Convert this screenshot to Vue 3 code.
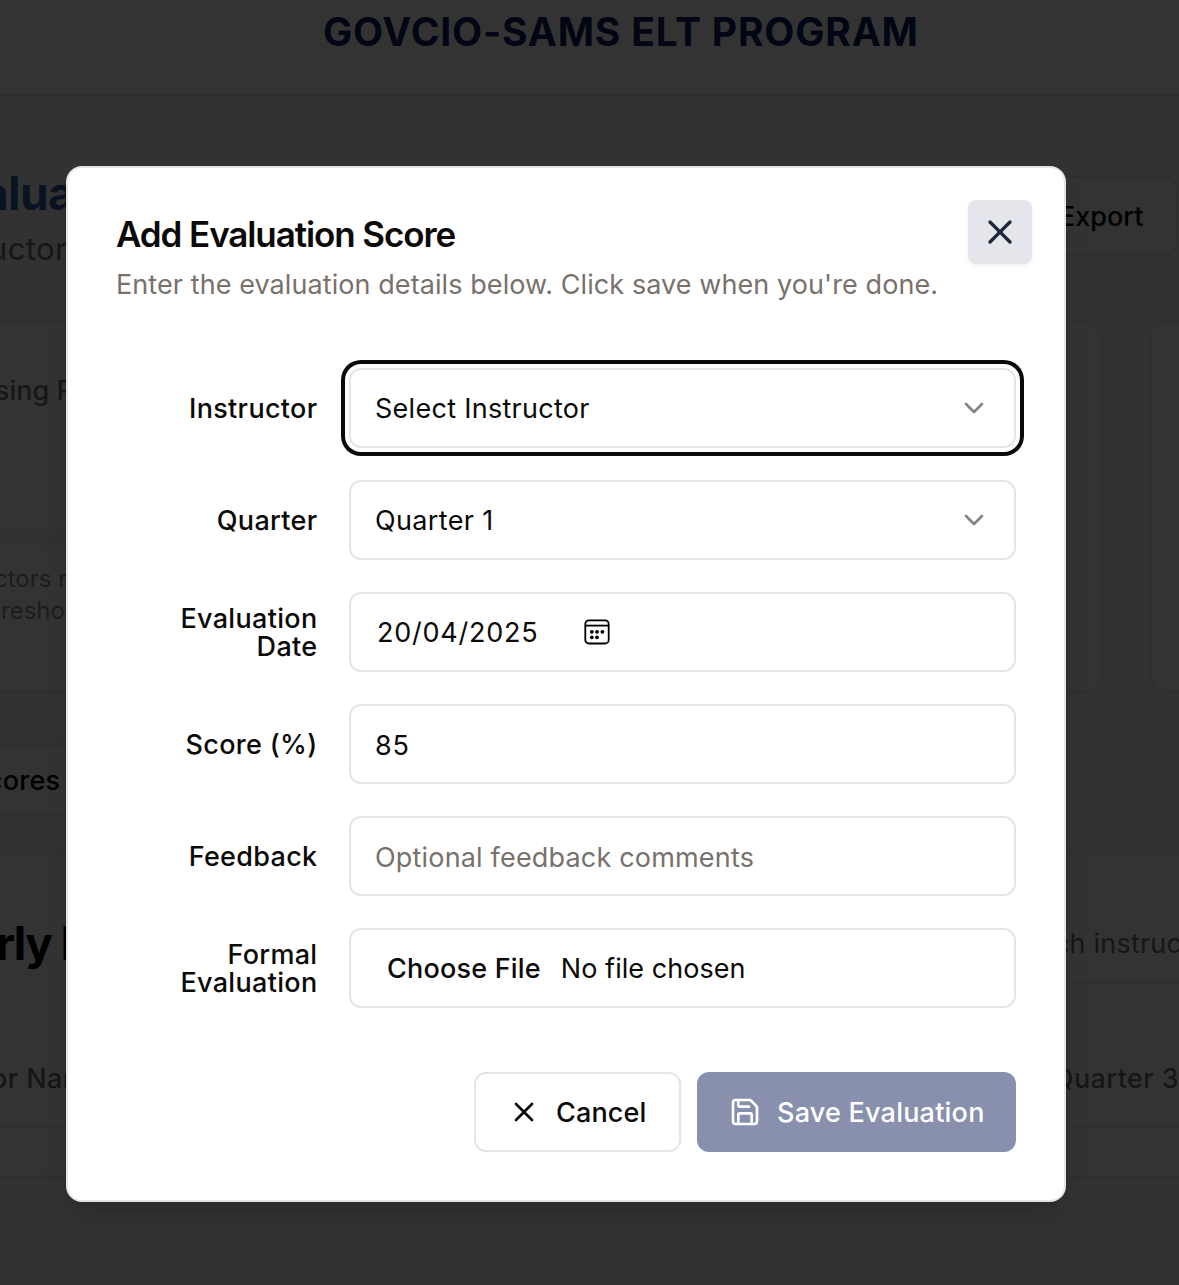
<script setup>
const close = ['M18 6 6 18', 'm6 6 12 12']
const save = [
  'M15.2 3a2 2 0 0 1 1.4.6l3.8 3.8a2 2 0 0 1 .6 1.4V19a2 2 0 0 1-2 2H5a2 2 0 0 1-2-2V5a2 2 0 0 1 2-2z',
  'M17 21v-7a1 1 0 0 0-1-1H8a1 1 0 0 0-1 1v7',
  'M7 3v4a1 1 0 0 0 1 1h7',
]
</script>

<template>
  <div class="screen">
    <div class="page">
      <header class="topbar"><span class="brand">GOVCIO-SAMS ELT PROGRAM</span></header>
      <section class="intro">
        <div>
          <div class="page-title">alua</div>
          <div class="page-sub">uctor</div>
        </div>
        <div class="export">Export</div>
      </section>
      <section class="cards">
        <div class="card stat">
          <div class="stat-title">sing R</div>
          <div class="stat-foot">ctors r<br /><span class="indent">resho</span></div>
        </div>
        <div class="card next"></div>
      </section>
      <div class="tabs"><span>cores</span></div>
      <section class="panel">
        <div class="panel-head">
          <span class="panel-title">rly I</span>
          <span class="search">ch instruc</span>
        </div>
        <div class="table-head"><span>or Nan</span><span class="q3">Quarter 3</span></div>
      </section>
    </div>
    <div class="overlay"></div>

    <div class="dialog" role="dialog">
      <button class="close" aria-label="Close">
        <svg class="icon x-lg" viewBox="0 0 24 24"><path v-for="d in close" :key="d" :d="d" /></svg>
      </button>
      <h2>Add Evaluation Score</h2>
      <p class="desc">Enter the evaluation details below. Click save when you're done.</p>

      <div class="form">
        <label>Instructor</label>
        <div class="field focused">
          <span class="t-select">Select Instructor</span>
          <svg class="icon chevron" viewBox="0 0 24 24"><path d="m6 9 6 6 6-6" /></svg>
        </div>
        <label>Quarter</label>
        <div class="field">
          <span class="t-quarter">Quarter 1</span>
          <svg class="icon chevron" viewBox="0 0 24 24"><path d="m6 9 6 6 6-6" /></svg>
        </div>
        <label>Evaluation Date</label>
        <div class="field date">
          <span class="t-date">20/04/2025</span>
          <svg class="calendar" viewBox="0 0 26 26">
            <rect x="1.3" y="1.3" width="23.4" height="23.2" rx="3.6" />
            <path d="M1.3 6.6h23.4" />
            <g class="dots">
              <circle cx="7.8" cy="12.8" r="1.9" /><circle cx="13" cy="12.8" r="1.9" /><circle cx="18.4" cy="12.8" r="1.9" />
              <circle cx="7.8" cy="18.3" r="1.9" /><circle cx="13" cy="18.3" r="1.9" />
            </g>
          </svg>
        </div>
        <label>Score (%)</label>
        <div class="field low"><span class="t-score">85</span></div>
        <label>Feedback</label>
        <div class="field low"><span class="placeholder">Optional feedback comments</span></div>
        <label>Formal Evaluation</label>
        <div class="field file"><span class="choose">Choose File</span><span class="none">No file chosen</span></div>
      </div>

      <div class="actions">
        <button class="btn outline">
          <svg class="icon" viewBox="0 0 24 24"><path v-for="d in close" :key="d" :d="d" /></svg>
          <span class="t-cancel">Cancel</span>
        </button>
        <button class="btn primary">
          <svg class="icon" viewBox="0 0 24 24"><path v-for="d in save" :key="d" :d="d" /></svg>
          <span>Save Evaluation</span>
        </button>
      </div>
    </div>
  </div>
</template>

<style>
body { background: #323232; }
</style>

<style scoped>
* { box-sizing: border-box; }
.screen {
  position: relative;
  width: 1179px;
  height: 1285px;
  overflow: hidden;
  font-family: Inter, "Liberation Sans", sans-serif;
  font-size: 27px;
  line-height: 40px;
  letter-spacing: 0.2px;
  color: #0c0a09;
  white-space: nowrap;
}
.page { height: 100%; background: #fafafa; display: flex; flex-direction: column; }
.topbar {
  height: 96px;
  flex: none;
  background: #fff;
  border-bottom: 2px solid #e5e7eb;
  box-shadow: 0 2px 4px rgba(0, 0, 0, 0.06);
  padding: 4px 0 0 323px;
}
.brand { font-size: 39px; line-height: 56px; font-weight: 700; color: #0a1e64; letter-spacing: 0.8px; }
.intro { height: 224px; flex: none; display: flex; justify-content: space-between; padding: 72px 1px 0 0; }
.page-title { font-size: 46px; line-height: 48px; font-weight: 700; letter-spacing: -0.6px; color: #2d5fa5; margin: 1px 0 0 -18px; }
.page-sub { font-size: 31px; line-height: 48px; color: #6b7280; margin: 8px 0 0 -11px; letter-spacing: 0.4px; }
.export {
  width: 160px; height: 80px; margin-top: 8px; padding: 19px 0 0 39px;
  border: 2px solid #eaeaea; border-radius: 12px; background: #fff;
  font-weight: 500; color: #000; letter-spacing: 0;
}
.cards { display: flex; gap: 48px; height: 372px; flex: none; }
.card { border: 2px solid #eee; border-radius: 16px; background: #fff; box-shadow: 0 2px 4px rgba(0, 0, 0, 0.05); }
.stat { width: 1122px; margin-left: -20px; flex: none; padding-top: 49px; display: flex; flex-direction: column; }
.stat-title { width: 600px; font-weight: 500; color: #6b7280; padding-left: 13px; height: 175px; border-bottom: 16px solid #f4f4f4; letter-spacing: 0; }
.stat-foot { font-size: 24px; line-height: 32px; color: #8b909b; padding: 17px 0 0 12px; letter-spacing: 0; }
.indent { padding-left: 7px; }
.next { flex: 0 0 200px; }
.tabs { width: 600px; height: 78px; flex: none; margin-top: 48px; background: #fff; font-weight: 500; color: #000; padding: 13px 0 0; border-top: 8px solid #f3f3f3; border-bottom: 6px solid #f3f3f3; }
.tabs span { margin-left: -13px; }
.panel { height: 325px; flex: none; margin: 34px -20px 0; border: 2px solid #eaeaea; background: #fff; box-shadow: 0 2px 4px rgba(0, 0, 0, 0.05); }
.panel-head { height: 178px; display: flex; justify-content: space-between; padding: 49px 0 0; }
.panel-title { font-size: 46px; line-height: 80px; font-weight: 700; letter-spacing: -1.6px; color: #000; margin-left: 14px; }
.search { width: 400px; height: 80px; border: 2px solid #ebebeb; padding: 19px 0 0 255px; color: #78716c; }
.table-head { height: 95px; border-bottom: 2px solid #eaeaea; font-weight: 500; color: #78716c; display: flex; justify-content: space-between; padding: 27px 18px 0 9px; letter-spacing: 0.4px; }
.overlay { position: absolute; inset: 0; background: rgba(0, 0, 0, 0.8); }

.dialog {
  position: absolute; left: 66px; top: 166px; width: 1000px; height: 1036px;
  background: #fff; border: 2px solid #e5e5e5; border-radius: 16px; padding: 48px;
  box-shadow: 0 20px 30px -6px rgba(0, 0, 0, 0.1), 0 8px 12px -8px rgba(0, 0, 0, 0.1);
}
.close {
  position: absolute; right: 32px; top: 32px; width: 64px; height: 64px; padding: 0; border: 0;
  border-radius: 8px; background: #e5e6eb; color: #1f2937; display: grid; place-items: center;
  box-shadow: 0 2px 4px rgba(0, 0, 0, 0.05);
}
.icon { width: 32px; height: 32px; fill: none; stroke: currentColor; stroke-width: 2; stroke-linecap: round; stroke-linejoin: round; flex: none; }
.x-lg { width: 40px; height: 40px; }
h2 { margin: 0; font-size: 35px; line-height: 36px; font-weight: 600; letter-spacing: -1.1px; }
.desc { margin: 13px 0 0; color: #78716c; line-height: 40px; letter-spacing: 0.08px; }
.form { margin-top: 63px; display: grid; grid-template-columns: 201px 667px; column-gap: 32px; row-gap: 32px; align-items: center; }
label { font-weight: 500; line-height: 28px; text-align: right; white-space: normal; letter-spacing: 0.32px; padding-top: 1px; margin-right: -0.5px; }
.field { height: 80px; border: 2px solid #e5e5e5; border-radius: 12px; padding: 0 24px; display: flex; align-items: center; background: #fff; }
.field span { padding-top: 1px; }
.field.low span { padding-top: 3px; }
.focused { box-shadow: 0 0 0 4px #fff, 0 0 0 8px #0c0a09; }
.chevron { margin-left: auto; opacity: 0.5; }
.t-select { letter-spacing: 0.28px; }
.t-quarter { letter-spacing: 0.36px; }
.t-date { letter-spacing: 0.77px; }
.t-score { letter-spacing: 0.9px; }
.date { padding-left: 26px; }
.placeholder { color: #78716c; letter-spacing: 0.18px; }
.calendar { width: 26px; height: 26px; margin-left: 45px; fill: none; stroke: #000; stroke-width: 1.8; }
.dots { fill: #000; stroke: none; }
.file { padding-left: 36px; }
.choose { font-weight: 500; margin-right: 20px; }
.none { letter-spacing: 0.05px; }
.actions { margin-top: 64px; display: flex; justify-content: flex-end; gap: 16px; }
.btn { height: 80px; border-radius: 12px; display: flex; align-items: center; gap: 16px; font: inherit; font-weight: 500; letter-spacing: 0.22px; padding: 0; white-space: nowrap; }
.btn span { padding-top: 1px; }
.btn .t-cancel { letter-spacing: 0.15px; }
.outline { width: 207px; padding-left: 32px; border: 2px solid #e5e5e5; background: #fff; color: #0c0a09; }
.primary { width: 319px; padding-left: 32px; border: 0; background: #8890ad; color: #fff; }
</style>
